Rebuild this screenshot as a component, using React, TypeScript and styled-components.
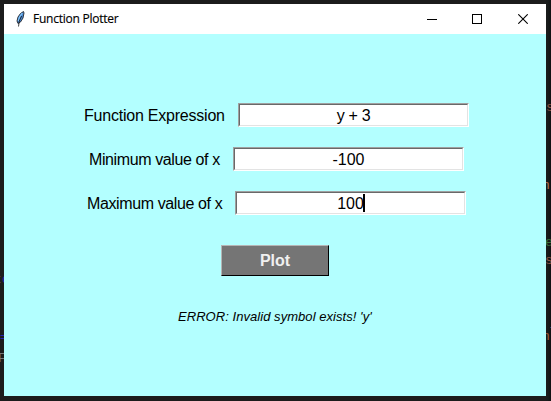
import React from "react";
import styled, { createGlobalStyle } from "styled-components";

const GlobalStyle = createGlobalStyle`
  * { box-sizing: border-box; }
  body { margin: 0; overflow: hidden; background: #1b1b1b; }
`;

const Desktop = styled.div`
  position: relative;
  width: 551px;
  height: 401px;
  padding: 4px 5px 5px 4px;
  overflow: hidden;
  background: linear-gradient(90deg, #1c1c1c 545px, #171a1a 548px, #101112 551px);
  font-family: "Liberation Sans", Arial, sans-serif;
`;

const CodeFragment = styled.span<{ $x: number; $y: number; $color: string }>`
  position: absolute;
  left: ${(p) => p.$x}px;
  top: ${(p) => p.$y}px;
  color: ${(p) => p.$color};
  font: 13px/14px "Liberation Mono", monospace;
  white-space: pre;
`;

const Window = styled.main`
  position: relative;
  width: 542px;
  height: 392px;
  background: #b3ffff;
  color: #000;
`;

const TitleBar = styled.header`
  display: flex;
  align-items: center;
  height: 30px;
  padding-left: 9px;
  background: #fff;
`;

const Title = styled.h1`
  flex: 1;
  margin: 0 0 0 4px;
  font: 400 12px/16px "Open Sans", "Noto Sans", sans-serif;
  letter-spacing: -0.25px;
  -webkit-text-stroke: 0.15px #000;
`;

const WindowButton = styled.button`
  display: flex;
  align-items: center;
  justify-content: center;
  width: 46px;
  height: 30px;
  padding: 0;
  border: 0;
  background: transparent;

  &:nth-last-child(2) {
    width: 45px;
    padding-right: 1px;
  }
`;

const Form = styled.form`
  display: flex;
  flex-direction: column;
  gap: 20px;
  padding-top: 69px;
`;

const Field = styled.label<{ $indent: number }>`
  display: flex;
  height: 24px;
  padding-left: ${(p) => p.$indent}px;
`;

const LabelText = styled.span<{ $width: number; $tracking: number }>`
  width: ${(p) => p.$width}px;
  font-size: 16px;
  line-height: 25px;
  letter-spacing: ${(p) => p.$tracking}px;
  white-space: nowrap;
`;

const Entry = styled.span`
  display: flex;
  justify-content: center;
  width: 231px;
  height: 24px;
  border: 1px solid;
  border-color: #a0a0a0 #fff #fff #a0a0a0;
  background: #fff;
`;

const EntryInner = styled.span<{ $tracking: number }>`
  display: flex;
  justify-content: center;
  width: 100%;
  border: 1px solid;
  border-color: #696969 #e3e3e3 #e3e3e3 #696969;
  font-size: 16px;
  line-height: 21px;
  letter-spacing: ${(p) => p.$tracking}px;
`;

const Caret = styled.i`
  width: 2px;
  height: 18px;
  margin: 1px -1px 0 -1px;
  background: #000;
`;

const PlotButton = styled.button`
  width: 108px;
  height: 31px;
  margin: 10px 0 0 217px;
  padding: 0;
  border: 1px solid;
  border-color: #b5b5b5 #000 #000 #b5b5b5;
  background: #757575;
  color: #f0f0f0;
  font: bold 16px/28px "Liberation Sans", Arial, sans-serif;
`;

const ErrorText = styled.p`
  margin: 13px 0 0 174px;
  font-size: 13px;
  font-style: italic;
  line-height: 16px;
  letter-spacing: 0.05px;
  white-space: nowrap;
`;

const fragments = [
  { x: 546, y: 101, color: "#8d5443", text: "s" },
  { x: 542, y: 179, color: "#b86f50", text: "n" },
  { x: 545, y: 236, color: "#386f38", text: "e" },
  { x: 545, y: 254, color: "#8d5443", text: "s" },
  { x: 542, y: 330, color: "#a55934", text: "n" },
  { x: 549, y: 326, color: "#888", text: "l" },
  { x: -6, y: 273, color: "#6f536c", text: "t" },
  { x: 2, y: 273, color: "#2525b0", text: "o" },
  { x: 0, y: 331, color: "#2525b0", text: "=" },
  { x: -2, y: 352, color: "#777", text: "F" },
];

const fields = [
  { label: "Function Expression", value: "y + 3", indent: 80, width: 154, tracking: -0.22, valueTracking: -0.3 },
  { label: "Minimum value of x", value: "-100", indent: 85, width: 144, tracking: -0.39, valueTracking: 0 },
  { label: "Maximum value of x", value: "100", indent: 83, width: 148, tracking: -0.39, valueTracking: 0, focused: true },
];

const FeatherIcon = () => (
  <svg width="16" height="18" viewBox="0 0 16 18" aria-hidden="true">
    <path d="M10.5 1.5 L7.5 3.5 L5 7 L4 11 L5 13.5 L7.5 12 L10 8 L11 3 Z" fill="#4a88cf" stroke="#22262c" strokeWidth="0.9" />
    <path d="M9.3 3.2 L6.5 7 L5.3 11" fill="none" stroke="#82c5fb" strokeWidth="1.2" />
    <path d="M8.6 6 L6.3 11 L5.5 16.5" fill="none" stroke="#141414" strokeWidth="0.8" />
  </svg>
);

export default function App() {
  return (
    <Desktop>
      <GlobalStyle />
      {fragments.map((f) => (
        <CodeFragment key={`${f.x}-${f.y}`} $x={f.x} $y={f.y} $color={f.color}>{f.text}</CodeFragment>
      ))}
      <Window>
        <TitleBar>
          <FeatherIcon />
          <Title>Function Plotter</Title>
          <WindowButton aria-label="Minimize">
            <svg width="10" height="10" shapeRendering="crispEdges"><path d="M0 5.5H10" stroke="#000" /></svg>
          </WindowButton>
          <WindowButton aria-label="Maximize">
            <svg width="10" height="10" shapeRendering="crispEdges"><path d="M.5.5H9.5V9.5H.5Z" fill="none" stroke="#000" /></svg>
          </WindowButton>
          <WindowButton aria-label="Close">
            <svg width="10" height="10"><path d="M.3.3L9.7 9.7M9.7.3L.3 9.7" stroke="#000" strokeWidth="1.1" /></svg>
          </WindowButton>
        </TitleBar>
        <Form onSubmit={(e) => e.preventDefault()}>
          {fields.map((f) => (
            <Field key={f.label} $indent={f.indent}>
              <LabelText $width={f.width} $tracking={f.tracking}>{f.label}</LabelText>
              <Entry>
                <EntryInner $tracking={f.valueTracking}>{f.value}{f.focused && <Caret />}</EntryInner>
              </Entry>
            </Field>
          ))}
          <PlotButton type="submit">Plot</PlotButton>
          <ErrorText>ERROR: Invalid symbol exists! 'y'</ErrorText>
        </Form>
      </Window>
    </Desktop>
  );
}
